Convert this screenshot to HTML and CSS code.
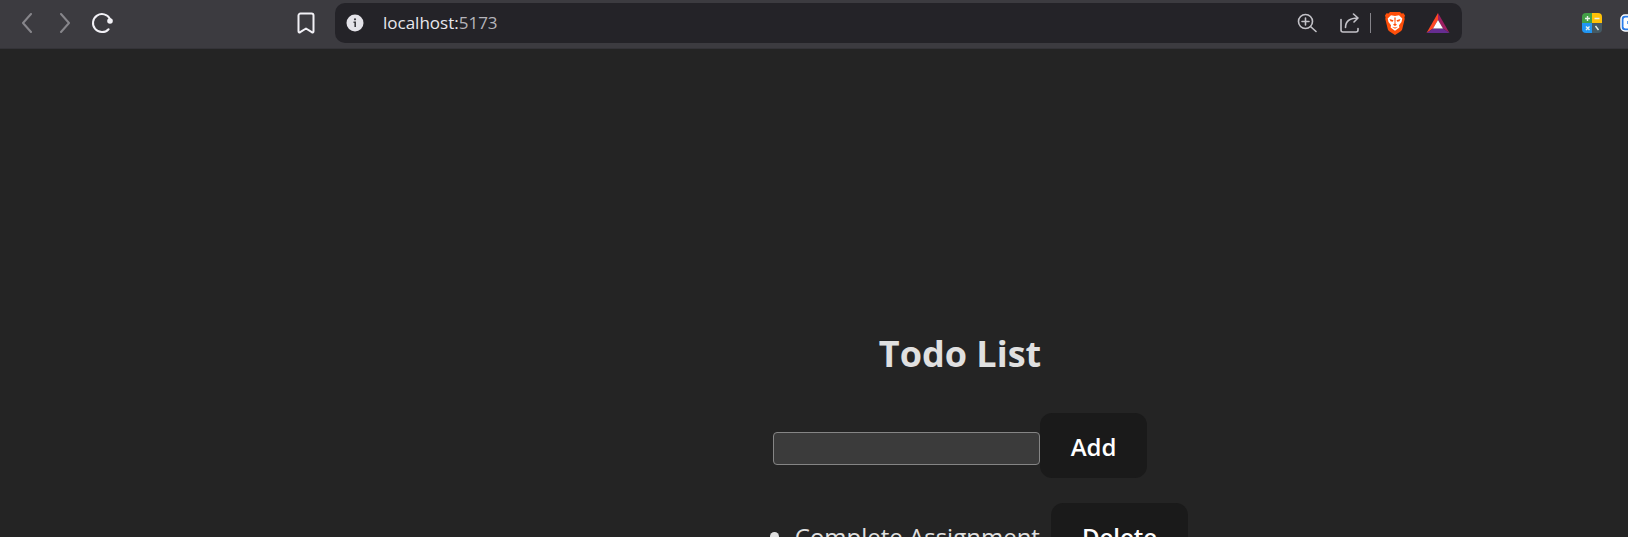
FILE: index.html
```html
<!DOCTYPE html>
<html lang="en">
<head>
<meta charset="utf-8">
<title>Todo List</title>
<link rel="stylesheet" href="styles.css">
</head>
<body>
<header class="toolbar">
  <nav class="nav" aria-label="Browser navigation">
    <button class="tool dim" aria-label="Back"><svg width="12" height="20" viewBox="0 0 12 20"><path d="M10 1 2 10l8 9"/></svg></button>
    <button class="tool dim" aria-label="Forward"><svg width="12" height="20" viewBox="0 0 12 20"><path d="m2 1 8 9-8 9"/></svg></button>
    <button class="tool reload" aria-label="Reload"><svg width="22" height="22" viewBox="0 0 22 22"><path d="M17.6 17.2A9 9 0 1 1 19 7"/><circle class="solid" cx="19" cy="9" r="2.8"/></svg></button>
    <button class="tool bookmark" aria-label="Bookmark"><svg width="18" height="22" viewBox="0 0 18 22"><path d="M3.500 1.500h11a2 2 0 0 1 2 2v15.700c0 1.200-.8 1.600-1.700.9L9 16.500l-5.800 3.600c-.9.7-1.700.3-1.700-.9V3.500a2 2 0 0 1 2-2z"/></svg></button>
  </nav>
  <div class="address">
    <svg class="info" width="18" height="18" viewBox="0 0 18 18"><circle cx="9" cy="9" r="8.500" fill="#e4e3e9"/><circle cx="9" cy="5.300" r="1.100" fill="#3b3a3f"/><path d="M7.500 8.200H9.200V13" fill="none" stroke="#3b3a3f" stroke-width="1.600"/></svg>
    <a class="url" href="#">localhost:<span class="port">5173</span></a>
    <div class="actions">
      <button class="tool" aria-label="Zoom"><svg width="20" height="20" viewBox="0 0 20 20"><circle cx="8.500" cy="8.500" r="7"/><path d="m13.500 13.500 5.500 5M5 8.500h7M8.500 5v7"/></svg></button>
      <button class="tool share" aria-label="Share"><svg width="20" height="20" viewBox="0 0 20 20"><path d="M1 6.500V17a2 2 0 0 0 2 2h13a2 2 0 0 0 2-2v-1.500M5.500 14.500c0-6 4-9.500 12.500-9.500M13.500 1 18 5l-4 4"/></svg></button>
      <span class="divider"></span>
      <button class="tool shield" aria-label="Shields"><svg width="22" height="24" viewBox="0 0 22 24"><path fill="#ff4f0a" d="M6 1h10l1.500 1.500 2-.2L21 4.500l-.6 2 .3 1.500-2.500 10.300c-.3 1-1 1.500-1.800 2.100L11 24l-5.400-3.600c-.8-.6-1.500-1.100-1.800-2.100L1.300 8l.3-1.500L1 4.500l1.500-2.200 2 .2z"/><path fill="#fff" d="m7 4.300 4 .7 4-.7 3.300 3.200-.8 3.500-2.500 3.200.4 2.300L11 19.700l-4.400-3.200.4-2.300L4.500 11l-.8-3.500z"/><path fill="#ff4f0a" d="m5.500 8 4 1.200-.8 1.500-2.200-.4zM16.500 8l-4 1.200.8 1.500 2.200-.4zM10.300 6.500h1.400l-.3 6 1.600 1.300-2 1.200-2-1.200 1.600-1.300zM8 15.800l3 .7 3-.7-3 2z"/></svg></button>
      <button class="tool rewards" aria-label="Rewards"><svg width="24" height="20" viewBox="0 0 24 20"><path fill="#ff4724" d="M12 0v7L7 15.500.5 20z"/><path fill="#9e1f63" d="M12 0v7l5 8.500 6.500 4.500z"/><path fill="#662d91" d="m.5 20 6.500-4.500h10l6.500 4.500z"/><path fill="#fff" d="m12 7 5 8.500H7z"/></svg></button>
    </div>
  </div>
  <div class="extensions">
    <button class="tool" aria-label="Calculator"><svg width="20" height="20" viewBox="0 0 20 20"><path fill="#43a047" d="M4 0h6v10H0V4a4 4 0 0 1 4-4z"/><path fill="#ffc107" d="M10 0h6a4 4 0 0 1 4 4v6H10z"/><path fill="#2196f3" d="M0 10h10v10H4a4 4 0 0 1-4-4z"/><path fill="#455a64" d="M10 10h10v6a4 4 0 0 1-4 4h-6z"/><path d="M3 5.500h5M5.500 3v5M12.500 5.500h5M4 13.500l3.500 3.500m0-3.500L4 17M13.500 13l3 4" fill="none" stroke="#e8f1e8" stroke-width="1.400"/></svg></button>
    <button class="tool" aria-label="Extension"><svg width="20" height="18" viewBox="0 0 20 18"><rect x="1" y="1" width="18" height="16" rx="4" fill="#2b7de9" stroke="#fff" stroke-width="1.500"/><rect x="3.500" y="3.500" width="13" height="11" rx="2" fill="#fff"/><path d="M8 7v3" stroke="#2b7de9" stroke-width="1.500"/></svg></button>
  </div>
</header>
<main class="page">
  <h1 class="title">Todo List</h1>
  <form class="entry">
    <input class="field" type="text" aria-label="New todo">
    <button class="button" type="button">Add</button>
  </form>
  <ul class="list">
    <li class="item"><span class="task">Complete Assignment</span><button class="button" type="button">Delete</button></li>
  </ul>
</main>
</body>
</html>
```
FILE: styles.css
```css
* { box-sizing: border-box; }

body {
  margin: 0;
  height: 100vh;
  overflow: hidden;
  background: #242424;
  color: #e0e0e0;
  font-family: "Segoe UI", "Open Sans", "Noto Sans", sans-serif;
}

button { font: inherit; cursor: pointer; }

.toolbar {
  display: flex;
  align-items: flex-start;
  height: 49px;
  padding-top: 3px;
  background: #3c3b40;
  border-bottom: 1px solid #343338;
}

.nav {
  display: flex;
  align-items: center;
  width: 335px;
  height: 40px;
  padding: 0 20px 0 21px;
  gap: 26px;
}

.tool {
  display: flex;
  flex: none;
  padding: 0;
  border: 0;
  background: none;
  color: #c3c2c8;
}

.tool svg { display: block; }
.nav path, .actions .tool:not(.shield):not(.rewards) svg {
  fill: none;
  stroke: currentColor;
  stroke-width: 1.6;
  stroke-linecap: round;
  stroke-linejoin: round;
}
.nav .dim { color: #87868b; }
.nav .dim path { stroke-width: 2; }
.nav .reload, .nav .bookmark { color: #f2f1f6; }
.nav .reload { margin-left: -6px; }
.nav .reload path { stroke-width: 2; }
.nav .bookmark { margin-left: auto; }
.nav .bookmark path { stroke-width: 2; }
.solid { fill: currentColor; }

.address {
  display: flex;
  flex: 1;
  align-items: center;
  height: 40px;
  padding: 0 12px 0 11px;
  border-radius: 10px;
  background: #242328;
}

.url {
  margin-left: 19px;
  padding-bottom: 2px;
  color: #e9e8ee;
  font-size: 17px;
  text-decoration: none;
}
.port { color: #b5b4ba; }

.actions {
  display: flex;
  align-items: center;
  margin-left: auto;
}
.share { margin-left: 23px; }
.divider {
  width: 1px;
  height: 20px;
  margin: 0 13px 0 10px;
  background: #85848a;
}
.rewards { margin-left: 20px; }

.extensions {
  display: flex;
  align-items: center;
  width: 166px;
  height: 40px;
  padding-left: 120px;
  gap: 18px;
  overflow: hidden;
}

.page {
  display: flex;
  flex-direction: column;
  align-items: center;
  padding: 278px 0 0 292px;
  font-size: 24px;
  line-height: 36px;
}

.title {
  margin: 0;
  font-size: 36px;
  font-weight: 700;
  line-height: 54px;
}

.entry {
  display: flex;
  align-items: center;
  margin-top: 32px;
}

.field {
  width: 267px;
  height: 33px;
  margin-top: 6px;
  padding: 1px 3px;
  border: 1px solid #858585;
  border-radius: 4px;
  background: #3b3b3b;
  color: #fff;
  font: inherit;
}

.button {
  padding: 16px 31px 13px;
  border: 0;
  border-radius: 12px;
  background: #1a1a1a;
  color: #fff;
  font-weight: 600;
}

.list {
  margin: 25px 0 0;
  padding-left: 63px;
}
.item::marker { font-size: 25px; }
.task { margin-right: 11px; }
```
